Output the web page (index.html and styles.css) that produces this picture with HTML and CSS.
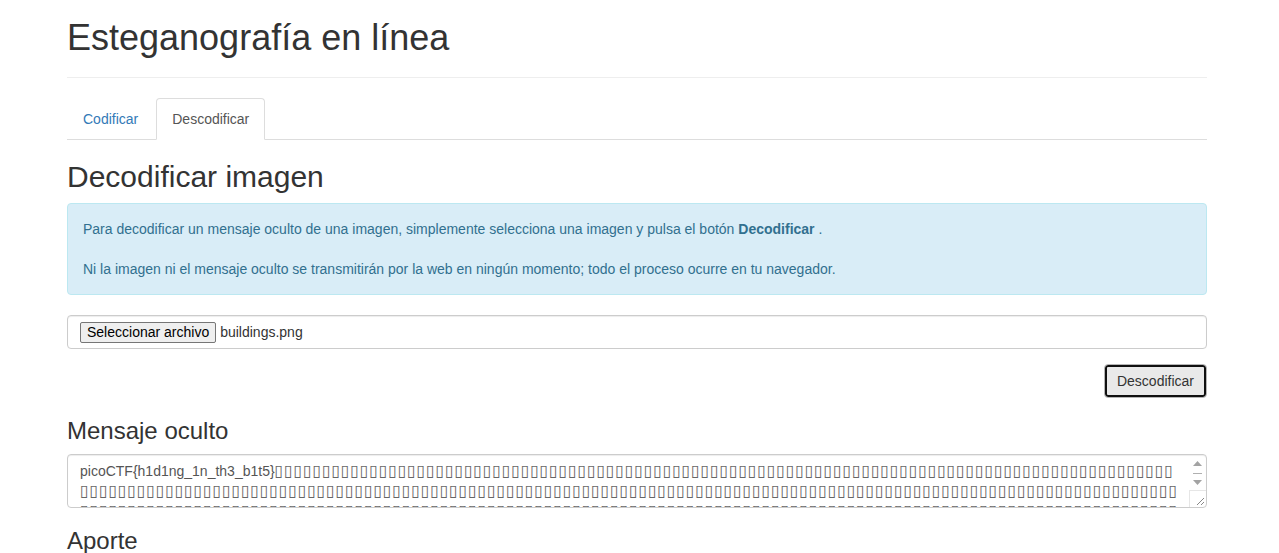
FILE: index.html
```html
<!DOCTYPE html>
<html lang="es">
<head>
<meta charset="utf-8">
<title>Esteganografía en línea</title>
<link rel="stylesheet" href="styles.css">
</head>
<body>
<div class="container">
  <div class="page-header">
    <h1>Esteganografía en línea</h1>
  </div>
  <ul class="nav-tabs">
    <li class="tab"><a href="#">Codificar</a></li>
    <li class="tab active"><a href="#">Descodificar</a></li>
  </ul>
  <h2 class="section-title">Decodificar imagen</h2>
  <div class="alert">
    Para decodificar un mensaje oculto de una imagen, simplemente selecciona una imagen y pulsa el botón <strong>Decodificar</strong> .<br><br>
    Ni la imagen ni el mensaje oculto se transmitirán por la web en ningún momento; todo el proceso ocurre en tu navegador.
  </div>
  <div class="form-group">
    <div class="form-control file-control">
      <button class="file-btn" type="button">Seleccionar archivo</button><span class="file-name">buildings.png</span>
    </div>
  </div>
  <div class="actions">
    <button class="btn focused" type="button">Descodificar</button>
  </div>
  <h3 class="sub-title">Mensaje oculto</h3>
  <div class="message">
    <div class="message-text"><span>picoCTF{h1d1ng_1n_th3_b1t5}</span><span class="tofu" id="tofu"></span></div>
    <div class="scrollbar">
      <div class="sb-btn"><svg width="9" height="5" viewBox="0 0 9 5"><path d="M0 5 L4.5 0 L9 5 Z" fill="#a3a3a3"/></svg></div>
      <div class="sb-thumb"></div>
      <div class="sb-btn"><svg width="9" height="5" viewBox="0 0 9 5"><path d="M0 0 L9 0 L4.5 5 Z" fill="#a3a3a3"/></svg></div>
      <div class="sb-fill"></div>
      <div class="sb-corner"><svg width="8" height="8" viewBox="0 0 8 8"><path d="M1 8 L8 1 M5 8 L8 5" stroke="#888" stroke-width="1"/></svg></div>
    </div>
  </div>
  <h3 class="sub-title">Aporte</h3>
</div>
<script>
  document.getElementById('tofu').textContent = '\u25AF'.repeat(360);
</script>
</body>
</html>
```

FILE: styles.css
```css
* { box-sizing: border-box; }
html, body { margin: 0; padding: 0; background: #fff; }
body {
  font-family: "Liberation Sans", Arial, sans-serif;
  font-size: 14px;
  line-height: 1.42857;
  color: #333;
}
.container {
  width: 1140px;
  margin-left: 67px;
}
.page-header {
  padding-bottom: 9px;
  margin: 0 0 20px;
  border-bottom: 1px solid #eee;
}
.page-header h1 {
  font-size: 36px;
  font-weight: 500;
  line-height: 1.1;
  margin: 18px 0 10px;
  color: #333;
}
.nav-tabs {
  list-style: none;
  margin: 0;
  padding: 0;
  display: flex;
  border-bottom: 1px solid #ddd;
}
.tab { margin-bottom: -1px; margin-right: 2px; }
.tab a {
  display: block;
  padding: 10px 15px;
  line-height: 20px;
  border: 1px solid transparent;
  border-radius: 4px 4px 0 0;
  color: #337ab7;
  text-decoration: none;
}
.tab.active a {
  color: #555;
  background: #fff;
  border-color: #ddd #ddd transparent;
}
.section-title {
  font-size: 30px;
  font-weight: 500;
  line-height: 1.1;
  margin: 20px 0 10px;
}
.alert {
  padding: 15px;
  margin-bottom: 20px;
  border: 1px solid #bce8f1;
  border-radius: 4px;
  background: #d9edf7;
  color: #31708f;
  line-height: 20px;
}
.form-group { margin-bottom: 15px; }
.form-control {
  display: block;
  width: 100%;
  padding: 6px 12px;
  font-size: 14px;
  line-height: 20px;
  color: #555;
  background: #fff;
  border: 1px solid #ccc;
  border-radius: 4px;
  box-shadow: inset 0 1px 1px rgba(0,0,0,.075);
}
.file-control {
  height: 34px;
  display: flex;
  align-items: flex-start;
  padding-top: 6px;
}
.file-btn {
  font-family: "Liberation Sans", Arial, sans-serif;
  font-size: 14px;
  height: 21px;
  line-height: 17px;
  padding: 1px 6px;
  color: #000;
  background: #efefef;
  border: 1px solid #767676;
  border-radius: 2px;
  margin: 0 4px 0 0;
}
.file-name {
  font-size: 14px;
  line-height: 21px;
  color: #333;
}
.actions {
  display: flex;
  justify-content: flex-end;
}
.btn {
  font-family: "Liberation Sans", Arial, sans-serif;
  font-size: 14px;
  line-height: 20px;
  padding: 6px 12px;
  color: #333;
  background: #e9e9e9;
  border: 1px solid #b5b5b5;
  border-radius: 4px;
}
.btn.focused {
  box-shadow: inset 0 0 0 2px #101010;
  height: 34px;
}
.sub-title {
  font-size: 24px;
  font-weight: 500;
  line-height: 1.1;
  margin: 20px 0 10px;
}
.message {
  display: flex;
  height: 54px;
  border: 1px solid #ccc;
  border-radius: 4px;
  background: #fff;
  box-shadow: inset 0 1px 1px rgba(0,0,0,.075);
  overflow: hidden;
}
.message-text {
  flex: 1;
  min-width: 0;
  height: 52px;
  overflow: hidden;
  padding: 6px 8px 0 12px;
  font-size: 14px;
  line-height: 20px;
  color: #555;
  word-break: break-all;
}
.tofu {
  font-family: "DejaVu Sans", sans-serif;
  font-size: 16px;
  letter-spacing: 0.66px;
  color: #666;
}
.scrollbar {
  width: 17px;
  display: flex;
  flex-direction: column;
  align-items: stretch;
}
.sb-btn {
  height: 14px;
  display: flex;
  align-items: center;
  justify-content: center;
}
.sb-btn:first-child { margin-top: 2px; }
.sb-thumb {
  height: 1px;
  margin: 2px 4px;
  background: #b0b0b0;
}
.sb-fill { flex: 1; }
.sb-corner {
  height: 17px;
  border-top: 1px solid #e6e6e6;
  border-left: 1px solid #e6e6e6;
  display: flex;
  align-items: flex-end;
  justify-content: flex-end;
  padding: 0 2px 2px 0;
}
```
